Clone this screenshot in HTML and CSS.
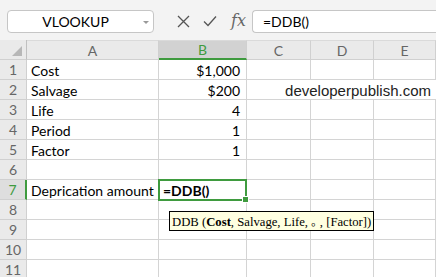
FILE: index.html
```html
<!DOCTYPE html>
<html lang="en">
<head>
    <meta charset="UTF-8">
    <meta name="viewport" content="width=device-width, initial-scale=1.0">
    <title>DDB formula</title>
    <link rel="stylesheet" href="styles.css">
</head>
<body>

<div class="toolbar">
    <div class="name-box">
        <span>VLOOKUP</span>
        <span class="drop"></span>
    </div>
    <div class="tools">
        <svg width="13" height="13" viewBox="0 0 13 13"><path d="M1 1 L12 12 M12 1 L1 12" stroke="#555" stroke-width="1.3" fill="none"/></svg>
        <svg width="14" height="12" viewBox="0 0 14 12"><path d="M1 6.5 L5 10.5 L13 1.5" stroke="#555" stroke-width="1.3" fill="none"/></svg>
        <span class="fx">fx</span>
    </div>
    <div class="formula">=DDB()</div>
</div>

<div class="sheet">
    <div class="corner"><span class="tri"></span></div>
    <div class="col-head">A</div>
    <div class="col-head active">B</div>
    <div class="col-head">C</div>
    <div class="col-head">D</div>
    <div class="col-head">E</div>

    <div class="row-head">1</div>
    <div class="cell">Cost</div>
    <div class="cell num">$1,000</div>
    <div class="cell"></div>
    <div class="cell"></div>
    <div class="cell"></div>

    <div class="row-head">2</div>
    <div class="cell">Salvage</div>
    <div class="cell num">$200</div>
    <div class="cell wide">developerpublish.com</div>

    <div class="row-head">3</div>
    <div class="cell">Life</div>
    <div class="cell num">4</div>
    <div class="cell"></div>
    <div class="cell"></div>
    <div class="cell"></div>

    <div class="row-head">4</div>
    <div class="cell">Period</div>
    <div class="cell num">1</div>
    <div class="cell"></div>
    <div class="cell"></div>
    <div class="cell"></div>

    <div class="row-head">5</div>
    <div class="cell">Factor</div>
    <div class="cell num">1</div>
    <div class="cell"></div>
    <div class="cell"></div>
    <div class="cell"></div>

    <div class="row-head">6</div>
    <div class="cell"></div>
    <div class="cell"></div>
    <div class="cell"></div>
    <div class="cell"></div>
    <div class="cell"></div>

    <div class="row-head active">7</div>
    <div class="cell">Deprication amount</div>
    <div class="cell selected"><b>=DDB()</b>
        <div class="tip">DDB (<b>Cost</b>, Salvage, Life, <span class="dot">｡</span> , [Factor])</div>
    </div>
    <div class="cell"></div>
    <div class="cell"></div>
    <div class="cell"></div>

    <div class="row-head">8</div>
    <div class="cell"></div>
    <div class="cell"></div>
    <div class="cell"></div>
    <div class="cell"></div>
    <div class="cell"></div>

    <div class="row-head">9</div>
    <div class="cell"></div>
    <div class="cell"></div>
    <div class="cell"></div>
    <div class="cell"></div>
    <div class="cell"></div>

    <div class="row-head">10</div>
    <div class="cell"></div>
    <div class="cell"></div>
    <div class="cell"></div>
    <div class="cell"></div>
    <div class="cell"></div>

    <div class="row-head">11</div>
    <div class="cell"></div>
    <div class="cell"></div>
    <div class="cell"></div>
    <div class="cell"></div>
    <div class="cell"></div>
</div>

</body>
</html>
```

FILE: styles.css
```css
* {
    box-sizing: border-box;
}
body {
    margin: 0;
    width: 436px;
    height: 277px;
    overflow: hidden;
    background-color: #fff;
    font-family: 'Lato', 'Open Sans', sans-serif;
    font-size: 14px;
    color: #000;
}
.toolbar {
    height: 40px;
    background-color: #f3f3f3;
    display: flex;
    align-items: center;
    padding-left: 7px;
    padding-top: 2px;
}
.name-box {
    width: 147px;
    height: 23px;
    background-color: #fff;
    border: 1px solid #c6c6c6;
    border-radius: 4px;
    display: flex;
    align-items: center;
    justify-content: center;
    padding-right: 10px;
    position: relative;
}
.drop {
    position: absolute;
    right: 4px;
    top: 10px;
    border-left: 3px solid transparent;
    border-right: 3px solid transparent;
    border-top: 3px solid #999;
}
.tools {
    display: flex;
    align-items: center;
    gap: 13px;
    margin-left: 23px;
    width: 75px;
}
.fx {
    font-family: 'DejaVu Serif', serif;
    font-style: italic;
    font-size: 16px;
    color: #666;
    margin-left: 1px;
    margin-top: -2px;
}
.formula {
    flex: 1;
    height: 23px;
    background-color: #fff;
    border: 1px solid #c6c6c6;
    border-right: none;
    border-radius: 4px 0 0 4px;
    padding-left: 10px;
    display: flex;
    align-items: center;
}
.sheet {
    display: grid;
    grid-template-columns: 27px 132px 88px 64px 63px 62px;
    grid-auto-rows: 20px;
    font-size: 14px;
}
.corner, .col-head, .row-head {
    background-color: #eaeaea;
    color: #666;
    border-right: 1px solid #d0d0d0;
    border-bottom: 1px solid #d0d0d0;
    display: flex;
    align-items: center;
    justify-content: center;
}
.corner {
    position: relative;
    border-right: 1px solid #c0c0c0;
}
.tri {
    position: absolute;
    right: 4px;
    bottom: 3px;
    border-left: 10px solid transparent;
    border-bottom: 10px solid #b7b7b7;
}
.col-head {
    border-top: 1px solid #dadada;
}
.col-head.active {
    background-color: #d2d2d2;
    color: #3f9b3f;
    border-bottom: 2px solid #3f9b3f;
}
.row-head.active {
    background-color: #dedede;
    color: #3f9b3f;
    border-right: 2px solid #3f9b3f;
}
.cell {
    border-right: 1px solid #d4d4d4;
    border-bottom: 1px solid #d4d4d4;
    padding: 1px 4px 0 4px;
    line-height: 19px;
    white-space: nowrap;
}
.num {
    text-align: right;
    padding-right: 6px;
}
.wide {
    grid-column: span 3;
    border-right: none;
    text-align: right;
    padding-right: 5px;
    font-family: 'Liberation Sans', Arial, sans-serif;
    font-size: 15px;
    color: #222;
}
.selected {
    position: relative;
}
.selected::after {
    content: "";
    position: absolute;
    left: -1px;
    top: -1px;
    right: -1px;
    bottom: -2px;
    border: 2px solid #3f9b3f;
}
.selected::before {
    content: "";
    position: absolute;
    right: -3px;
    bottom: -4px;
    width: 5px;
    height: 5px;
    background-color: #3f9b3f;
    border: 1px solid #fff;
    z-index: 1;
}
.tip {
    position: absolute;
    left: 10px;
    top: 31px;
    height: 20px;
    padding: 0 2px;
    background-color: #ffffe1;
    border: 1px solid #000;
    font-family: 'Liberation Serif', 'Times New Roman', serif;
    font-size: 12.7px;
    line-height: 18px;
    z-index: 2;
}
.tip b {
    font-weight: bold;
}
.dot {
    font-family: 'Noto Sans CJK JP', sans-serif;
    font-size: 11px;
}
```
